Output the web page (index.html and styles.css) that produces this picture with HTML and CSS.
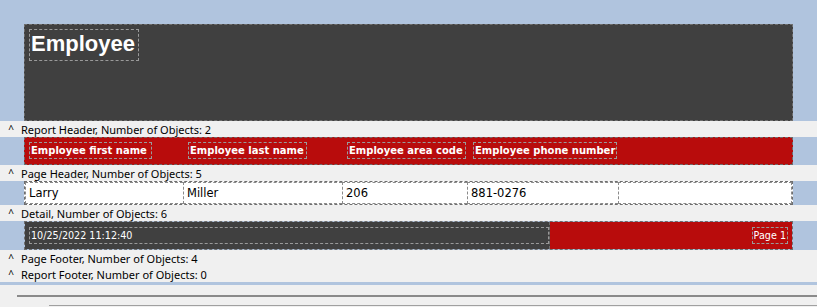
FILE: index.html
```html
<!DOCTYPE html>
<html lang="en">
<head>
    <meta charset="UTF-8">
    <title>Report Designer - Employee</title>
    <link rel="stylesheet" href="styles.css">
</head>
<body>
    <div class="designer">
        <div class="top-gap"></div>

        <div class="band-row">
            <div class="band report-header">
                <div class="field title">Employee</div>
            </div>
        </div>
        <div class="section-bar"><span class="caret">^</span>Report Header, Number of Objects: 2</div>

        <div class="band-row">
            <div class="band page-header">
                <div class="field head" style="width: 123px;">Employee first name</div>
                <div class="field head" style="width: 119px; margin-left: 36px;">Employee last name</div>
                <div class="field head" style="width: 119px; margin-left: 40px;">Employee area code</div>
                <div class="field head" style="width: 144px; margin-left: 7px;">Employee phone number</div>
            </div>
        </div>
        <div class="section-bar"><span class="caret">^</span>Page Header, Number of Objects: 5</div>

        <div class="band-row">
            <div class="band detail">
                <div class="field cell" style="width: 158px;">Larry</div>
                <div class="field cell" style="width: 159px;">Miller</div>
                <div class="field cell" style="width: 125px;">206</div>
                <div class="field cell" style="width: 151px;">881-0276</div>
                <div class="field cell last"></div>
            </div>
        </div>
        <div class="section-bar"><span class="caret">^</span>Detail, Number of Objects: 6</div>

        <div class="band-row">
            <div class="band page-footer">
                <div class="footer-left">
                    <div class="field small">10/25/2022 11:12:40</div>
                </div>
                <div class="footer-right">
                    <div class="field small">Page 1</div>
                </div>
            </div>
        </div>
        <div class="section-bar"><span class="caret">^</span>Page Footer, Number of Objects: 4</div>
        <div class="section-bar"><span class="caret">^</span>Report Footer, Number of Objects: 0</div>

        <div class="bottom-strip"></div>
        <div class="scroll-area">
            <div class="rule rule-top"></div>
            <div class="rule rule-bottom"></div>
        </div>
    </div>
</body>
</html>
```

FILE: styles.css
```css
body {
    margin: 0;
    padding: 0;
    background-color: #f0f0f0;
    font-family: "Noto Sans", "DejaVu Sans", sans-serif;
    overflow: hidden;
}
.designer {
    width: 817px;
    height: 307px;
    display: flex;
    flex-direction: column;
}
.top-gap {
    height: 24px;
    background-color: #b0c4de;
}
.band-row {
    display: flex;
    background-color: #b0c4de;
    padding-left: 24px;
}
.band {
    box-sizing: border-box;
    width: 769px;
    border: 1px dashed #6e6e6e;
    display: flex;
}
.report-header {
    height: 97px;
    background-color: #404040;
    padding: 4px 0 0 4px;
    align-items: flex-start;
}
.page-header {
    height: 28px;
    background-color: #b80c0c;
    padding: 4px 0 0 4px;
    align-items: flex-start;
}
.detail {
    height: 24px;
    background-color: #fff;
    padding: 0;
}
.page-footer {
    height: 29px;
    padding: 0;
}
.footer-left {
    box-sizing: border-box;
    width: 525px;
    background-color: #404040;
    border-right: 1px dashed #6e6e6e;
    padding: 5px 0 0 4px;
}
.footer-right {
    flex: 1;
    background-color: #b80c0c;
    display: flex;
    justify-content: flex-end;
    align-items: flex-start;
    padding: 5px 4px 0 0;
}
.field {
    box-sizing: border-box;
    border: 1px dashed #9a9a9a;
    white-space: nowrap;
    overflow: hidden;
}
.title {
    width: 110px;
    height: 32px;
    color: #fff;
    font-family: "Liberation Sans", Arial, sans-serif;
    font-weight: bold;
    font-size: 22px;
    line-height: 28px;
    padding-left: 1px;
}
.head {
    height: 17px;
    color: #fff;
    font-family: "DejaVu Sans", Verdana, sans-serif;
    font-weight: bold;
    font-size: 10px;
    line-height: 15px;
    padding-left: 1px;
}
.cell {
    height: 22px;
    border-color: #8a8a8a;
    color: #000;
    font-family: "DejaVu Sans", Tahoma, sans-serif;
    font-size: 11.5px;
    line-height: 20px;
    padding-left: 3px;
    border-right: none;
}
.cell.last {
    flex: 1;
    border-right: 1px dashed #8a8a8a;
}
.small {
    height: 17px;
    color: #fff;
    font-family: "DejaVu Sans", Verdana, sans-serif;
    font-size: 9.6px;
    line-height: 15px;
    padding: 0 1px;
}
.section-bar {
    height: 16px;
    display: flex;
    align-items: center;
    font-size: 11px;
    color: #000;
    background-color: #f0f0f0;
}
.caret {
    width: 20px;
    text-align: center;
    font-size: 10px;
    padding-left: 1px;
}
.bottom-strip {
    height: 3px;
    background-color: #b0c4de;
}
.scroll-area {
    flex: 1;
    display: flex;
    flex-direction: column;
    padding-top: 10px;
}
.rule {
    height: 2px;
    background-color: #8a8a8a;
}
.rule-top {
    margin-left: 17px;
}
.rule-bottom {
    margin-left: 49px;
    margin-top: 8px;
    height: 1px;
    background-color: #a0a0a0;
}
```
